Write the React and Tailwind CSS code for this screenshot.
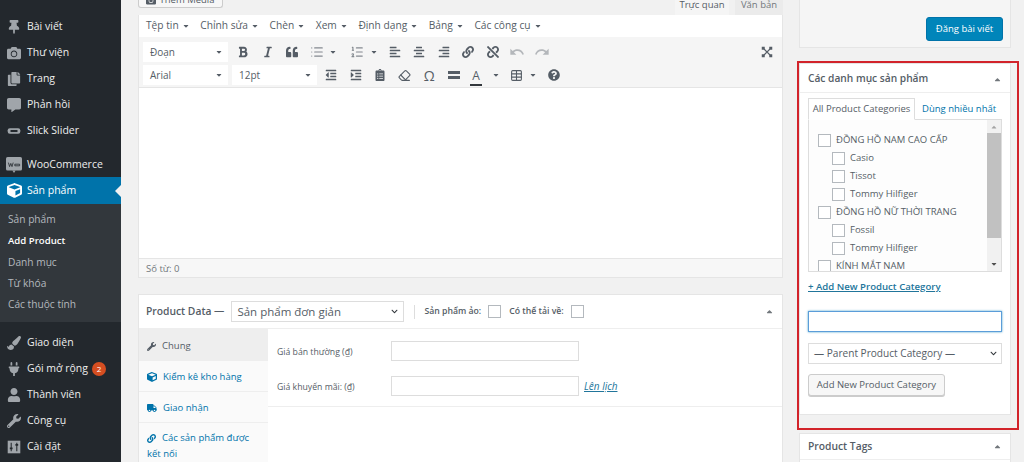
import { FaBold, FaItalic, FaQuoteLeft, FaAlignLeft, FaAlignCenter, FaAlignRight, FaLink, FaUnlink, FaQuestionCircle, FaThumbtack, FaCopy, FaCommentAlt, FaPaintBrush, FaPlug, FaUser, FaWrench, FaCube, FaTruck, FaClipboardList, FaOutdent, FaIndent, FaCamera, FaCaretDown, FaCaretUp, FaChevronDown } from "react-icons/fa";
import { MdUndo, MdRedo } from "react-icons/md";
import { List, ListOrdered, Eraser, Table } from "lucide-react";

const Slider = ({ className }) => (
    <svg viewBox="0 0 20 20" className={className} fill="currentColor">
        <rect x="1" y="6" width="18" height="8" rx="3" />
        <rect x="5" y="8.5" width="10" height="3" fill="#23282d" />
    </svg>
);

const Woo = ({ className }) => (
    <svg viewBox="0 0 20 20" className={className}>
        <rect x="0" y="0" width="20" height="17" rx="2" fill="#a0a5aa" />
        <path d="M8 17l2 3 2-3z" fill="#a0a5aa" />
        <path d="M3 7l1.5 5 1.5-4 1.5 4 1.5-5M11 9h6v2h-6z" stroke="#23282d" fill="none" />
    </svg>
);

const Settings = ({ className }) => (
    <svg viewBox="0 0 20 20" className={className}>
        <rect x="1" y="1" width="18" height="18" fill="#a0a5aa" />
        <path d="M6 4v12M14 4v12" stroke="#23282d" strokeWidth="1.5" />
        <path d="M4 12h4M12 7h4" stroke="#23282d" strokeWidth="2.5" />
    </svg>
);

const Fullscreen = ({ className }) => (
    <svg viewBox="0 0 16 16" className={className} fill="currentColor">
        <path d="M4 4l8 8M12 4l-8 8" stroke="currentColor" strokeWidth="1.5" />
        <rect x="1" y="1" width="4" height="4" />
        <rect x="11" y="1" width="4" height="4" />
        <rect x="1" y="11" width="4" height="4" />
        <rect x="11" y="11" width="4" height="4" />
    </svg>
);

const menuTop = [
    { label: "Bài viết", Icon: FaThumbtack },
    { label: "Thư viện", Icon: FaCamera },
    { label: "Trang", Icon: FaCopy },
    { label: "Phản hồi", Icon: FaCommentAlt },
    { label: "Slick Slider", Icon: Slider },
];

const menuBottom = [
    { label: "Giao diện", Icon: FaPaintBrush },
    { label: "Gói mở rộng", Icon: FaPlug, badge: 2 },
    { label: "Thành viên", Icon: FaUser },
    { label: "Công cụ", Icon: FaWrench },
    { label: "Cài đặt", Icon: Settings },
];

const subMenu = ["Sản phẩm", "Add Product", "Danh mục", "Từ khóa", "Các thuộc tính"];
const editorMenu = ["Tệp tin", "Chỉnh sửa", "Chèn", "Xem", "Định dạng", "Bảng", "Các công cụ"];
const categories = [
    ["ĐỒNG HỒ NAM CAO CẤP"],
    ["Casio", 1],
    ["Tissot", 1],
    ["Tommy Hilfiger", 1],
    ["ĐỒNG HỒ NỮ THỜI TRANG"],
    ["Fossil", 1],
    ["Tommy Hilfiger", 1],
    ["KÍNH MẮT NAM"],
];

const MenuItem = ({ label, Icon, badge, iconClass = "w-[14px] h-[14px]" }) => (
    <div className="h-[26px] flex items-center pl-[6px] text-[#eeeeee] text-[10.5px]">
        <span className="w-[16px] flex justify-center text-[#a0a5aa]"><Icon className={iconClass} /></span>
        <span className="ml-[5px]">{label}</span>
        {badge && <span className="ml-[4px] w-[14px] h-[14px] rounded-full bg-[#d54e21] text-white text-[8px] flex items-center justify-center">{badge}</span>}
    </div>
);

const Tool = ({ Icon, className = "w-[12px] h-[12px]" }) => (
    <span className="w-[24.5px] flex items-center justify-center text-[#555d66]">
        <Icon className={className} />
    </span>
);

const Caret = ({ className }) => <FaCaretDown className={`w-[8px] h-[8px] text-[#555d66] ${className}`} />;

const FakeSelect = ({ label, width }) => (
    <div className={`${width} h-[20px] bg-white flex items-center justify-between pl-[7px] pr-[5px] text-[10px] text-[#555d66]`}>
        {label}
        <FaCaretDown className="w-[8px] h-[8px]" />
    </div>
);

const Check = ({ indent }) => (
    <span className={`${indent ? "ml-[14px]" : ""} w-[13px] h-[13px] border border-[#b4b9be] bg-white shrink-0 mr-[5px]`} />
);

const App = () => {
    return (
        <div className="w-[1024px] h-[462px] overflow-hidden flex bg-[#f1f1f1] font-['Open_Sans','Noto_Sans',sans-serif]">
            <aside className="w-[121px] h-full bg-[#23282d] shrink-0 pt-[14px]">
                {menuTop.map((m) => <MenuItem key={m.label} {...m} />)}
                <div className="h-[8px]" />
                <div className="-mb-[1px]"><MenuItem label="WooCommerce" Icon={Woo} iconClass="w-[16px] h-[16px]" /></div>
                <div className="relative h-[27px] bg-[#0073aa] flex items-center pl-[6px] text-white text-[10.5px]">
                    <span className="w-[16px] flex justify-center"><FaCube className="w-[15px] h-[15px]" /></span>
                    <span className="ml-[5px]">Sản phẩm</span>
                    <span className="absolute right-0 top-[8px] border-y-[6px] border-y-transparent border-r-[6px] border-r-[#f1f1f1]" />
                </div>
                <div className="bg-[#32373c] h-[118px] pt-[5px] pl-[8px] mb-[8px]">
                    {subMenu.map((s) => (
                        <div key={s} className={`h-[21.3px] flex items-center ${s === "Add Product" ? "text-white font-semibold text-[9.6px]" : "text-[#b4b9be] text-[10.2px]"}`}>{s}</div>
                    ))}
                </div>
                {menuBottom.map((m) => <MenuItem key={m.label} {...m} />)}
            </aside>

            <main className="w-[645px] ml-[17px] shrink-0 flex flex-col">
                <div className="h-[15px] shrink-0 flex text-[#555d66]">
                    <div className="w-[85px] h-[8px] overflow-hidden border border-t-0 border-[#cccccc] rounded-b-[3px] bg-[#f7f7f7] flex justify-center gap-[3px] text-[9.5px] leading-[10px]">
                        <FaCamera className="w-[10px] h-[10px] -mt-[5px]" />
                        <span className="-mt-[5px]">Thêm Media</span>
                    </div>
                    <div className="ml-auto flex text-[9.5px] leading-[10px]">
                        <span className="w-[54px] bg-[#f5f5f5] text-center">Trực quan</span>
                        <span className="w-[48px] ml-[6px] bg-[#ebebeb] text-center text-[#72777c]">Văn bản</span>
                    </div>
                </div>
                <div className="bg-white border border-[#e5e5e5] border-t-0 shrink-0">
                    <div className="h-[22px] flex items-center pl-[7px] text-[10.2px] text-[#555d66] gap-[10.6px]">
                        {editorMenu.map((m) => (
                            <span key={m} className="flex items-center gap-[3px] whitespace-nowrap">{m}<FaCaretDown className="w-[8px] h-[8px]" /></span>
                        ))}
                    </div>
                    <div className="h-[51px] bg-[#f5f5f5] border-b border-[#e5e5e5] pt-[5px] pl-[4px] flex flex-col gap-[3px]">
                        <div className="h-[20px] flex items-center">
                            <FakeSelect label="Đoạn" width="w-[85px]" />
                            <span className="w-[3px]" />
                            <Tool Icon={FaBold} />
                            <Tool Icon={FaItalic} />
                            <Tool Icon={FaQuoteLeft} />
                            <Tool Icon={List} className="w-[14px] h-[14px] opacity-70" />
                            <Caret className="mr-[8px]" />
                            <Tool Icon={ListOrdered} className="w-[14px] h-[14px] opacity-70" />
                            <Caret className="mr-[5px]" />
                            <Tool Icon={FaAlignLeft} />
                            <Tool Icon={FaAlignCenter} />
                            <Tool Icon={FaAlignRight} />
                            <Tool Icon={FaLink} />
                            <Tool Icon={FaUnlink} />
                            <span className="opacity-40 flex"><Tool Icon={MdUndo} className="w-[16px] h-[16px]" /><Tool Icon={MdRedo} className="w-[16px] h-[16px]" /></span>
                            <span className="ml-auto mr-[3px] flex"><Tool Icon={Fullscreen} /></span>
                        </div>
                        <div className="h-[20px] flex items-center">
                            <FakeSelect label="Arial" width="w-[85px]" />
                            <span className="w-[4px]" />
                            <FakeSelect label="12pt" width="w-[85px]" />
                            <span className="w-[2px]" />
                            <Tool Icon={FaOutdent} />
                            <Tool Icon={FaIndent} />
                            <Tool Icon={FaClipboardList} />
                            <Tool Icon={Eraser} className="w-[13px] h-[13px]" />
                            <span className="w-[24.5px] text-center text-[14px] text-[#555d66]">Ω</span>
                            <span className="w-[24.5px] flex flex-col items-center gap-[2px]">
                                <span className="w-[12px] h-[3px] bg-[#555d66]" />
                                <span className="w-[12px] h-[3px] bg-[#555d66]" />
                            </span>
                            <span className="w-[20px] text-center text-[12px] leading-[13px] text-[#555d66]"><span className="border-b-2 border-[#32373c] px-[2px]">A</span></span>
                            <Caret className="mr-[10px] ml-[6px]" />
                            <Table className="w-[13px] h-[13px] text-[#555d66]" />
                            <Caret className="ml-[6px] mr-[11px]" />
                            <FaQuestionCircle className="w-[12px] h-[12px] text-[#555d66]" />
                        </div>
                    </div>
                    <div className="h-[170px] bg-white" />
                    <div className="h-[19px] bg-[#f7f7f7] border-t border-[#e5e5e5] flex items-center pl-[7px] pt-[2px] text-[9.5px] text-[#72777c]">Số từ: 0</div>
                </div>

                <section className="mt-[16px] bg-white border border-[#e5e5e5] border-b-0 flex-1 min-h-0 flex flex-col overflow-hidden">
                    <div className="h-[34px] shrink-0 border-b border-[#eeeeee] flex items-center pl-[7px] pr-[8px] text-[#555d66]">
                        <span className="text-[10.3px] font-semibold whitespace-nowrap">Product Data —</span>
                        <span className="ml-[7px] w-[173px] h-[21px] border border-[#dddddd] flex items-center justify-between pl-[5px] pr-[5px] text-[11.5px]">
                            Sản phẩm đơn giản
                            <FaChevronDown className="w-[7px] h-[7px] text-[#32373c]" />
                        </span>
                        <span className="ml-[10px] h-[14px] border-l border-[#dddddd]" />
                        <span className="ml-[9px] text-[8.7px] font-semibold whitespace-nowrap">Sản phẩm ảo:</span>
                        <span className="ml-[7px] w-[13px] h-[13px] border border-[#b4b9be]" />
                        <span className="ml-[8px] text-[8.7px] font-semibold whitespace-nowrap">Có thể tải về:</span>
                        <span className="ml-[7px] w-[13px] h-[13px] border border-[#b4b9be]" />
                        <FaCaretUp className="ml-auto w-[9px] h-[9px] text-[#72777c]" />
                    </div>
                    <div className="flex flex-1 min-h-0">
                        <div className="w-[129px] bg-[#fafafa] text-[9.5px] text-[#0073aa]">
                            <div className="h-[32px] bg-[#eeeeee] text-[#555d66] flex items-center pl-[8px] pt-[2px] gap-[6px]"><FaWrench className="w-[9px] h-[9px]" />Chung</div>
                            <div className="h-[31px] border-b border-[#eeeeee] flex items-center pl-[8px] pt-[2px] gap-[6px]"><FaCube className="w-[10px] h-[10px]" />Kiểm kê kho hàng</div>
                            <div className="h-[31px] border-b border-[#eeeeee] flex items-center pl-[8px] pt-[2px] gap-[6px]"><FaTruck className="w-[10px] h-[10px]" />Giao nhận</div>
                            <div className="pl-[8px] pt-[7px] leading-[16px]"><FaLink className="inline w-[9px] h-[9px] mr-[6px]" />Các sản phẩm được<br />kết nối</div>
                        </div>
                        <div className="flex-1">
                            <div className="h-[78px] border-b border-[#eeeeee] pt-[12px] pl-[9px] flex flex-col gap-[15px] text-[8.7px] text-[#555d66]">
                                <div className="flex items-center">
                                    <span className="w-[114px] pt-[3px]">Giá bán thường (₫)</span>
                                    <span className="w-[188px] h-[20px] border border-[#dddddd]" />
                                </div>
                                <div className="flex items-center">
                                    <span className="w-[114px] pt-[3px]">Giá khuyến mãi: (₫)</span>
                                    <span className="w-[188px] h-[20px] border border-[#dddddd]" />
                                    <span className="ml-[5px] italic underline text-[#21759b] text-[10px]">Lên lịch</span>
                                </div>
                            </div>
                        </div>
                    </div>
                </section>
            </main>

            <aside className="ml-[16px] w-[222px] shrink-0 flex flex-col">
                <div className="w-[212px] h-[48px] shrink-0 bg-[#f5f5f5] border border-[#e5e5e5] border-t-0 pt-[17px] pr-[7px] flex justify-end">
                    <span className="w-[77px] h-[24px] bg-[#0085ba] border border-[#0073aa] rounded-[3px] text-white text-[9.5px] flex items-center justify-center">Đăng bài viết</span>
                </div>
                <div className="mt-[13px] -ml-[2px] w-[222px] h-[369px] border-2 border-[#d2232a] shrink-0">
                    <div className="w-[212px] h-[352px] bg-white border border-[#e5e5e5] text-[#555d66]">
                        <div className="h-[29px] border-b border-[#eeeeee] flex items-center justify-between pl-[8px] pr-[8px] pt-[2px]">
                            <span className="text-[10.2px] font-semibold whitespace-nowrap">Các danh mục sản phẩm</span>
                            <FaCaretUp className="w-[9px] h-[9px] text-[#72777c]" />
                        </div>
                        <div className="mx-[8px] mt-[5px] flex text-[9.5px] h-[22px] items-end relative z-10">
                            <span className="h-[22px] w-[107px] border border-[#dddddd] border-b-white bg-white flex items-center justify-center whitespace-nowrap">All Product Categories</span>
                            <span className="ml-[7px] h-[22px] flex items-center text-[#0073aa] whitespace-nowrap">Dùng nhiều nhất</span>
                        </div>
                        <div className="mx-[8px] h-[153px] border border-[#dddddd] -mt-[1px] flex overflow-hidden">
                            <div className="flex-1 bg-[#fdfdfd] pl-[9px] pt-[11px] text-[9.5px]">
                                {categories.map(([t, sub], i) => (
                                    <div key={i} className="h-[18px] flex items-center whitespace-nowrap"><Check indent={sub} />{t}</div>
                                ))}
                            </div>
                            <div className="w-[14px] bg-[#f1f1f1] flex flex-col items-center">
                                <div className="h-[13px] shrink-0 flex items-center"><FaCaretUp className="w-[8px] h-[8px] text-[#a3a3a3]" /></div>
                                <span className="w-full h-[105px] shrink-0 bg-[#c1c1c1]" />
                                <div className="flex-1 flex items-end pb-[3px]"><FaCaretDown className="w-[8px] h-[8px] text-[#505050]" /></div>
                            </div>
                        </div>
                        <div className="mx-[8px] mt-[8px] text-[9.6px] font-semibold text-[#21759b] underline whitespace-nowrap">+ Add New Product Category</div>
                        <div className="mx-[8px] mt-[17px] h-[21px] border border-[#5b9dd9] shadow-[0_0_2px_rgba(30,140,190,0.8)]" />
                        <div className="mx-[8px] mt-[11px] h-[21px] border border-[#dddddd] flex items-center justify-between pl-[5px] pr-[4px] text-[10.1px] whitespace-nowrap">
                            — Parent Product Category —
                            <FaChevronDown className="w-[7px] h-[7px] text-[#32373c]" />
                        </div>
                        <div className="ml-[8px] mt-[10px] w-[137px] h-[22px] border border-[#cccccc] rounded-[3px] bg-[#f7f7f7] shadow-[0_1px_0_#cccccc] flex items-center justify-center text-[9.5px] whitespace-nowrap">Add New Product Category</div>
                    </div>
                </div>
                <div className="mt-[3px] w-[212px] h-[29px] bg-white border border-[#e5e5e5] border-b-0 shrink-0">
                    <div className="h-[26px] border-b border-[#eeeeee] flex items-center justify-between pl-[8px] pr-[8px] text-[#555d66]">
                        <span className="text-[10.3px] font-semibold">Product Tags</span>
                        <FaCaretUp className="w-[9px] h-[9px] text-[#72777c]" />
                    </div>
                </div>
            </aside>
        </div>
    );
};

export default App;
